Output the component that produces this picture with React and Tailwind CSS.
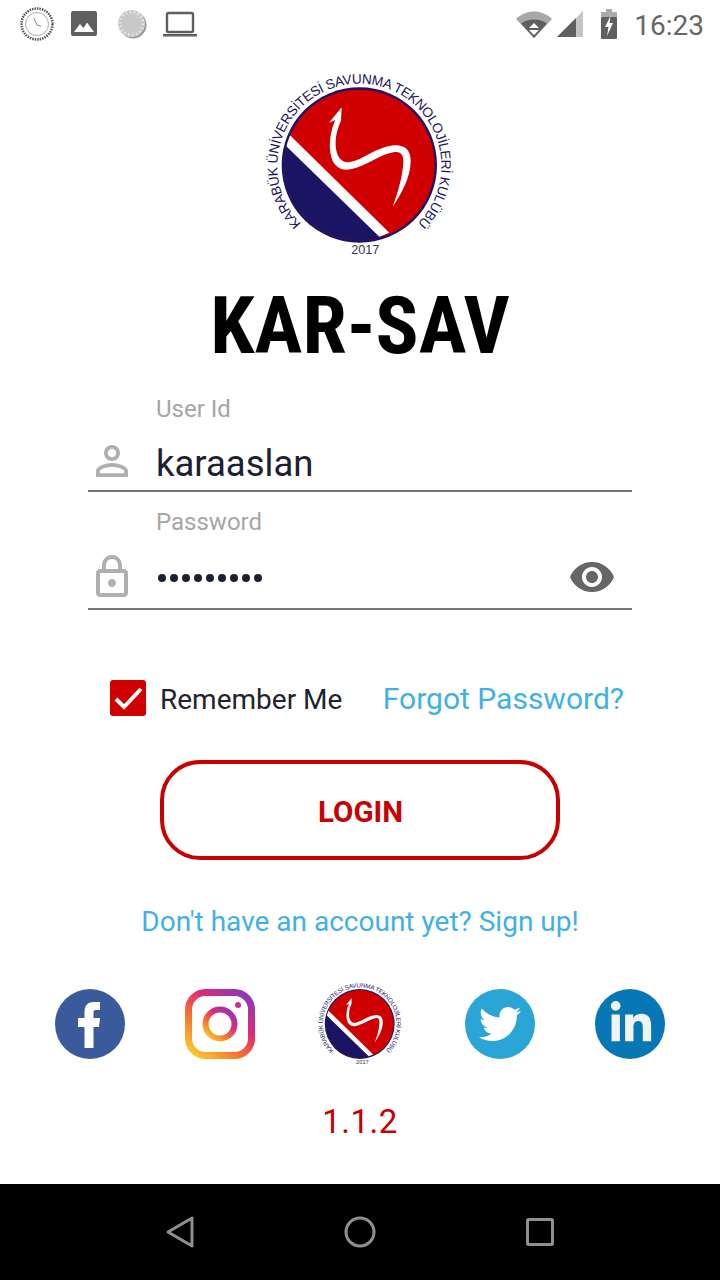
import { FaLinkedinIn, FaTwitter } from "react-icons/fa";

const Logo = ({ className, id }) => (
  <svg viewBox="0 0 600 570" className={`overflow-visible ${className}`}>
    <defs>
      <clipPath id={`disc-${id}`}>
        <circle cx="298" cy="285" r="226" />
      </clipPath>
      <path id={`ring-${id}`} d="M 124 461 A 246 246 0 1 1 472 461" />
    </defs>
    <circle cx="298" cy="285" r="233" fill="#1b1464" />
    <g clipPath={`url(#disc-${id})`}>
      <rect x="0" y="0" width="600" height="570" fill="#d00000" />
      <polygon points="60,190 400,530 60,570 0,570 0,190" fill="#1b1464" />
      <polygon points="90,196 388,488 358,500 72,222" fill="#ffffff" />
    </g>
    <path
      d="M245 112 L207 158 L226 150 C212 180 204 225 214 262 C222 292 246 304 272 298 C320 288 360 252 404 246 C426 244 430 258 430 276 C428 320 414 366 398 410 C426 368 452 320 452 272 C452 238 432 224 402 226 C350 230 310 270 270 276 C246 280 232 262 228 236 C224 205 232 175 243 152 Z"
      fill="#ffffff"
    />
    <text fontFamily="'Liberation Sans', sans-serif" fontSize="41" fill="#1b1464">
      <textPath href={`#ring-${id}`} textLength="1159" lengthAdjust="spacing">
        KARABÜK ÜNİVERSİTESİ SAVUNMA TEKNOLOJİLERİ KULÜBÜ
      </textPath>
    </text>
    <text
      x="316"
      y="552"
      textAnchor="middle"
      fontFamily="'Liberation Sans', sans-serif"
      fontSize="38"
      fill="#333355"
    >
      2017
    </text>
  </svg>
);

const StatusBar = () => (
  <div className="flex h-12 shrink-0 items-center justify-between pl-[20px] pr-[16px]">
    <div className="flex items-center">
      {/* clock logo */}
      <svg viewBox="0 0 34 34" className="h-[34px] w-[34px]">
        <circle cx="17" cy="17" r="15.5" fill="none" stroke="#555" strokeWidth="2.5" strokeDasharray="1.5 1" />
        <circle cx="17" cy="17" r="11.5" fill="none" stroke="#aaa" strokeWidth="1" />
        <path d="M14 11 L17 18 L21 19" fill="none" stroke="#888" strokeWidth="1" />
      </svg>
      {/* image */}
      <svg viewBox="0 0 26 26" className="ml-[17px] h-[26px] w-[26px]">
        <rect width="26" height="25" rx="2" fill="#5f5f5f" />
        <path d="M3 21 L9 13 L12.500 17 L16 11.500 L23 21 Z" fill="#fff" />
      </svg>
      {/* disc */}
      <svg viewBox="0 0 30 30" className="ml-[20px] h-[30px] w-[30px]">
        <circle cx="16" cy="16" r="13.500" fill="#999" />
        <circle cx="14.500" cy="14.500" r="13.500" fill="#c8c8c8" />
        <circle cx="14.500" cy="14.500" r="11.500" fill="none" stroke="#e6e6e6" strokeWidth="3" strokeDasharray="1.500 2.500" />
      </svg>
      {/* laptop */}
      <svg viewBox="0 0 34 26" className="ml-[16px] h-[26px] w-[34px]">
        <rect x="4" y="2" width="26" height="19" rx="1.500" fill="none" stroke="#5f5f5f" strokeWidth="2.400" />
        <rect x="0" y="23" width="34" height="2.500" fill="#5f5f5f" />
      </svg>
    </div>
    <div className="flex items-center">
      {/* wifi */}
      <svg viewBox="0 0 36 28" className="h-[28px] w-[36px]">
        <path d="M0 9 C10 -1 26 -1 36 9 L18 28 Z" fill="#a8a8a8" />
        <path d="M5 13.500 C12 8 24 8 31 13.500 L18 28 Z" fill="#5f5f5f" />
        <path d="M18 13 L23 18 H13 Z M13 20 H23 L18 25 Z" fill="#fff" />
      </svg>
      {/* signal */}
      <svg viewBox="0 0 26 26" className="ml-[5px] h-[26px] w-[26px]">
        <path d="M0 26 L26 0 V26 Z" fill="#c4c4c4" />
        <path d="M0 26 L19 7 V26 Z" fill="#5f5f5f" />
      </svg>
      {/* battery */}
      <svg viewBox="0 0 16 30" className="ml-[18px] h-[30px] w-[16px]">
        <path d="M5 0 H11 V3 H16 V9 H0 V3 H5 Z" fill="#aaa" />
        <rect y="8" width="16" height="22" rx="1" fill="#5f5f5f" />
        <path d="M9.500 7 L4 18 H7.500 L6 27 L12 14 H8.500 Z" fill="#fff" />
      </svg>
      <span className="ml-[17px] mt-[4px] text-[28px] leading-none text-[#666]">16:23</span>
    </div>
  </div>
);

const App = () => {
  return (
    <div className="flex h-[1280px] w-[720px] flex-col overflow-hidden bg-white font-['Roboto',sans-serif]">
      <StatusBar />

      {/* Logo + title */}
      <div className="mt-[22px] flex justify-center">
        <Logo id="main" className="h-[190px] w-[200px]" />
      </div>
      <h1 className="mt-[21px] flex h-[90px] items-center justify-center text-[80px] font-bold text-black [font-stretch:75%]">
        KAR-SAV
      </h1>

      {/* Form */}
      <div className="px-[88px]">
        <label className="mt-[23px] ml-[68px] block text-[24px] leading-[30px] text-[#a6a6a6]">User Id</label>
        <div className="mt-[13px] flex h-12 items-center gap-5">
          <svg viewBox="0 0 24 24" className="h-12 w-12" fill="#b0b0b0">
            <path d="M12 5.900c1.160 0 2.100.940 2.100 2.100s-.940 2.100-2.100 2.100S9.900 9.160 9.900 8s.940-2.100 2.100-2.100m0 9c2.970 0 6.100 1.460 6.100 2.100v1.100H5.900V17c0-.640 3.130-2.100 6.100-2.100M12 4C9.790 4 8 5.790 8 8s1.790 4 4 4 4-1.790 4-4-1.790-4-4-4zm0 9c-2.670 0-8 1.340-8 4v3h16v-3c0-2.660-5.330-4-8-4z" />
          </svg>
          <span className="mt-[6px] text-[36.5px] leading-none text-[#1c2033]">karaaslan</span>
        </div>
        <div className="mt-[5px] h-[2px] bg-[#757575]" />

        <label className="mt-[15px] ml-[68px] block text-[24px] leading-[30px] text-[#a6a6a6]">Password</label>
        <div className="mt-[16px] flex h-12 items-center gap-5">
          <svg viewBox="0 0 24 24" className="h-12 w-12" fill="#b0b0b0">
            <path d="M18 8h-1V6c0-2.760-2.240-5-5-5S7 3.240 7 6v2H6c-1.100 0-2 .900-2 2v10c0 1.100.900 2 2 2h12c1.100 0 2-.900 2-2V10c0-1.100-.900-2-2-2zM9 6c0-1.660 1.340-3 3-3s3 1.340 3 3v2H9V6zm9 14H6V10h12v10zm-6-3c1.100 0 2-.900 2-2s-.900-2-2-2-2 .900-2 2 .900 2 2 2z" />
          </svg>
          <div className="ml-[2px] mt-[2px] flex flex-1 items-center gap-[4px]">
            {[...Array(9)].map((_, i) => (
              <span key={i} className="h-[8px] w-[8px] rounded-full bg-[#1c2033]" />
            ))}
          </div>
          <svg viewBox="0 0 24 24" className="mr-[16px] h-12 w-12" fill="#666666">
            <path d="M12 4.500C7 4.500 2.730 7.610 1 12c1.730 4.390 6 7.500 11 7.500s9.270-3.110 11-7.500c-1.730-4.390-6-7.500-11-7.500zM12 17c-2.760 0-5-2.240-5-5s2.240-5 5-5 5 2.240 5 5-2.240 5-5 5zm0-8c-1.660 0-3 1.340-3 3s1.340 3 3 3 3-1.340 3-3-1.340-3-3-3z" />
          </svg>
        </div>
        <div className="mt-[7px] h-[2px] bg-[#757575]" />

        {/* Remember + forgot */}
        <div className="mt-[70px] flex h-9 items-center pl-[22px] pr-2">
          <div className="flex h-9 w-9 items-center justify-center rounded-[3px] bg-[#d00000]">
            <svg viewBox="0 0 36 36" className="h-9 w-9" fill="none" stroke="#fff" strokeWidth="4">
              <path d="M6 19 L14 27 L31 9" />
            </svg>
          </div>
          <span className="ml-[14px] mt-[4px] text-[28px] leading-none text-[#1f2333]">Remember Me</span>
          <a className="ml-auto mt-[2px] text-[30px] leading-none text-[#3fb1e5]">Forgot Password?</a>
        </div>
      </div>

      <button className="mx-auto mt-[44px] h-[100px] w-[400px] rounded-[40px] border-[4px] border-[#c90000] bg-white pl-[1px] pt-[4px] text-[29.5px] font-bold text-[#c90000]">
        LOGIN
      </button>

      <a className="mt-[42px] flex h-10 items-center justify-center text-[28px] text-[#3fb1e5]">
        Don't have an account yet? Sign up!
      </a>

      {/* Social links */}
      <div className="mt-[47px] flex h-[70px] items-center justify-center gap-[60px]">
        <svg viewBox="0 0 70 70" className="h-[70px] w-[70px]">
          <circle cx="35" cy="35" r="35" fill="#3b5a9b" />
          <path
            d="M38.500 59 H29.500 V38 H23 V29 H29.500 V23 C29.500 16 33 13 39 13 H45 V21 H41 C38.800 21 38.500 22.300 38.500 24 V29 H45 L44 38 H38.500 Z"
            fill="#fff"
          />
        </svg>
        <svg viewBox="0 0 70 70" className="h-[70px] w-[70px]">
          <defs>
            <linearGradient id="insta" x1="0.1" y1="1" x2="0.9" y2="0">
              <stop offset="0" stopColor="#fdc830" />
              <stop offset="0.35" stopColor="#f7702f" />
              <stop offset="0.65" stopColor="#dd2a7b" />
              <stop offset="1" stopColor="#8a3ab9" />
            </linearGradient>
          </defs>
          <rect x="3.500" y="3.500" width="63" height="63" rx="17" fill="none" stroke="url(#insta)" strokeWidth="7" />
          <circle cx="35" cy="35" r="14.500" fill="none" stroke="url(#insta)" strokeWidth="6" />
          <circle cx="53" cy="16" r="3" fill="#c8338f" />
        </svg>
        <div className="-my-2 w-[90px]">
          <Logo id="small" className="h-[86px] w-[90px]" />
        </div>
        <div className="flex h-[70px] w-[70px] items-center justify-center rounded-full bg-[#2ba5d6]">
          <FaTwitter className="text-[42px] text-white" />
        </div>
        <div className="flex h-[70px] w-[70px] items-center justify-center rounded-full bg-[#0877b5]">
          <FaLinkedinIn className="ml-[2px] text-[46px] text-[#f1f3f5]" />
        </div>
      </div>

      <div className="mt-[43px] flex h-10 items-center justify-center text-[33px] tracking-[0.5px] text-[#c90000]">1.1.2</div>

      {/* Nav bar */}
      <div className="mt-auto flex h-[96px] shrink-0 items-center justify-center gap-[140px] bg-black">
        <svg viewBox="0 0 40 40" className="h-10 w-10" fill="none" stroke="#8f8f8f" strokeWidth="3" strokeLinejoin="round">
          <path d="M8 20 L32 6 V34 Z" />
        </svg>
        <svg viewBox="0 0 40 40" className="h-10 w-10" fill="none" stroke="#8f8f8f" strokeWidth="3">
          <circle cx="20" cy="20" r="14" />
        </svg>
        <svg viewBox="0 0 40 40" className="h-10 w-10" fill="none" stroke="#8f8f8f" strokeWidth="3" strokeLinejoin="round">
          <rect x="7.500" y="7.500" width="25" height="25" rx="1" />
        </svg>
      </div>
    </div>
  );
};

export default App;
